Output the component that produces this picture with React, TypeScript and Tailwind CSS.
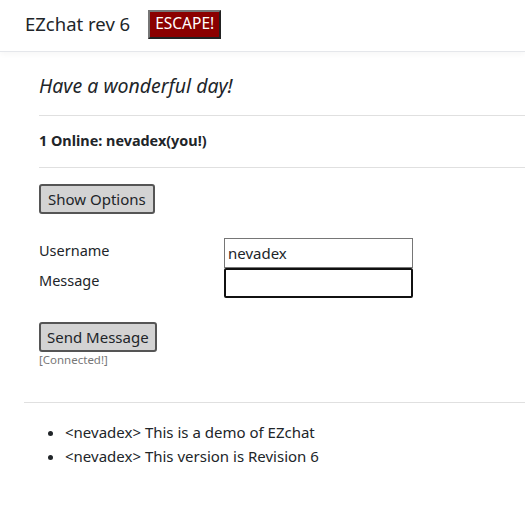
export default function App() {
    const messages = [
        { user: 'nevadex', text: 'This is a demo of EZchat' },
        { user: 'nevadex', text: 'This version is Revision 6' },
    ]

    return (
        <div className="min-h-[510px] bg-white text-[#212529] font-['Segoe_UI','Noto_Sans',sans-serif]">
            {/* Header */}
            <header className="h-[52px] flex items-center px-[25px] pb-[3px] border-b border-[#e5e7eb] shadow-[0_2px_6px_rgba(0,0,0,0.04)]">
                <span className="text-[18.5px] leading-none">EZchat rev 6</span>
                <button className="ml-[18px] h-[29px] px-[5px] bg-[#8b0000] text-white text-[15.5px] leading-none border-2 border-t-[#767676] border-l-[#767676] border-r-[#222] border-b-[#222]">
                    ESCAPE!
                </button>
            </header>

            <div className="pl-[24px]">
                <div className="pl-[15px] pt-[20px] pb-[34px]">
                    <p className="italic text-[19.5px] leading-[28px]">Have a wonderful day!</p>
                    <hr className="mt-[15px] border-[#e0e0e0]" />
                    <p className="font-bold text-[14.4px] leading-[20px] pt-[15px] pb-[16px]">1 Online: nevadex(you!)</p>
                    <hr className="border-[#e0e0e0]" />

                    <button className="mt-[16px] h-[30px] px-[7px] bg-[#d3d3d3] text-[15px] leading-none border-2 border-[#555] rounded-[3px]">
                        Show Options
                    </button>

                    <div className="mt-[24px] grid grid-cols-[185px_189px] w-max">
                        <label className="text-[14.5px] leading-[24px]">Username</label>
                        <input
                            defaultValue="nevadex"
                            className="h-[30px] px-[3px] text-[15px] border border-[#767676] outline-none"
                        />
                        <label className="text-[14.5px] leading-[24px]">Message</label>
                        <input className="h-[30px] px-[3px] text-[15px] border-2 border-[#111] rounded-[2px] outline-none" />
                    </div>

                    <button className="mt-[24px] h-[30px] px-[6px] bg-[#d3d3d3] text-[15px] leading-none border-2 border-[#555] rounded-[3px]">
                        Send Message
                    </button>
                    <p className="text-[11.5px] leading-[16px] text-[#777]">[Connected!]</p>
                </div>
            </div>

            <div className="ml-[24px] border-t border-[#e0e0e0] pt-[17px]">
                <ul className="list-disc pl-[41px] text-[15px] leading-[24px]">
                    {messages.map((m, i) => (
                        <li key={i}>
                            <span>&lt;{m.user}&gt;</span> {m.text}
                        </li>
                    ))}
                </ul>
            </div>
        </div>
    )
}
